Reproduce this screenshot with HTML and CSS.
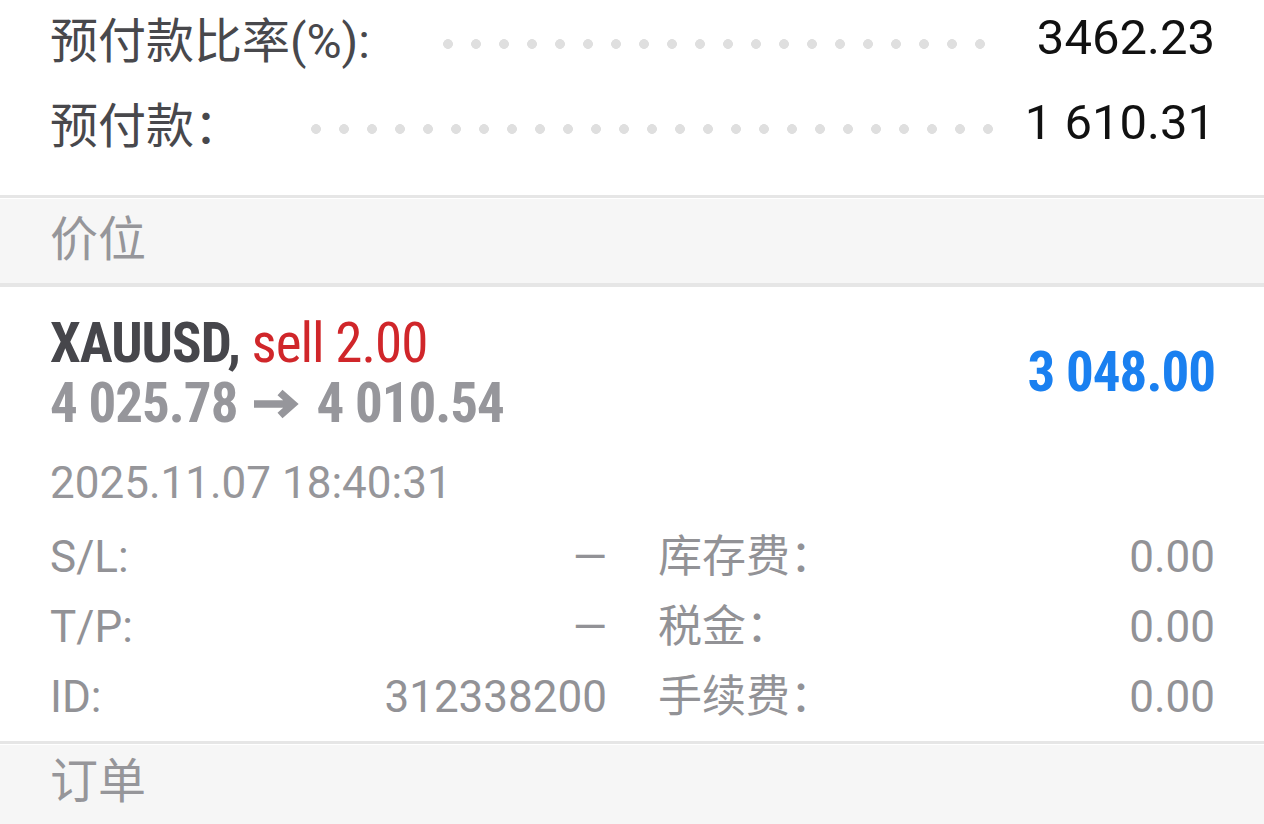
FILE: index.html
```html
<!DOCTYPE html>
<html lang="zh-CN">
<head>
    <meta charset="UTF-8">
    <meta name="viewport" content="width=device-width, initial-scale=1.0">
    <title>交易</title>
    <link rel="stylesheet" href="styles.css">
</head>
<body>
<div class="summary">
    <div class="summary-row">
        <span class="summary-label">预付款比率(%):</span>
        <span class="dots dots-ratio"></span>
        <span class="summary-value">3462.23</span>
    </div>
    <div class="summary-row">
        <span class="summary-label">预付款：</span>
        <span class="dots dots-margin"></span>
        <span class="summary-value">1 610.31</span>
    </div>
</div>

<div class="section-header">价位</div>

<div class="position">
    <div class="position-top">
        <div class="position-title">
            <div class="title-line"><span class="symbol">XAUUSD,</span> <span class="sell">sell 2.00</span></div>
            <div class="title-line prices">4 025.78<svg class="arrow" width="46" height="30" viewBox="0 0 46 30"><path d="M1 15H39M27 3.5L40 15L27 26.5" fill="none" stroke="currentColor" stroke-width="7.5"/></svg>4 010.54</div>
        </div>
        <div class="profit">3 048.00</div>
    </div>
    <div class="open-time">2025.11.07 18:40:31</div>
    <div class="details">
        <div class="detail"><span>S/L:</span><span>—</span></div>
        <div class="detail"><span>库存费：</span><span>0.00</span></div>
        <div class="detail"><span>T/P:</span><span>—</span></div>
        <div class="detail"><span>税金：</span><span>0.00</span></div>
        <div class="detail"><span>ID:</span><span>312338200</span></div>
        <div class="detail"><span>手续费：</span><span>0.00</span></div>
    </div>
</div>

<div class="section-header section-orders">订单</div>
</body>
</html>
```

FILE: styles.css
```css
* {
    box-sizing: border-box;
    margin: 0;
    padding: 0;
}

body {
    background-color: #fff;
    font-family: Roboto, "Noto Sans CJK SC", sans-serif;
    width: 1264px;
    height: 824px;
    overflow: hidden;
}

.summary {
    display: flex;
    flex-direction: column;
    gap: 11px;
    padding: 0 49px 36px 50px;
}

.summary-row {
    display: flex;
    align-items: center;
    height: 74px;
}

.summary-label {
    font-size: 48px;
    color: #48484c;
    white-space: nowrap;
}

.summary-value {
    font-size: 49px;
    color: #111;
    white-space: nowrap;
}

.dots {
    flex: none;
    height: 10px;
    margin-top: 14px;
    margin-left: auto;
    background: radial-gradient(circle, #dfdfdf 4.6px, rgba(223,223,223,0) 5.2px) 0 0 / 28px 10px repeat-x;
}

.dots-ratio {
    width: 560px;
    margin-right: 43px;
}

.dots-margin {
    width: 700px;
    margin-right: 23px;
}

.section-header {
    border-top: 3px solid #e6e6e6;
    border-bottom: 4px solid #e6e6e6;
    background-color: #f6f6f6;
    box-shadow: inset 0 1px 0 #fff;
    height: 92px;
    line-height: 84px;
    padding-left: 50px;
    font-size: 48px;
    color: #96969a;
}

.section-orders {
    border-bottom: none;
    height: 90px;
    line-height: 76px;
}

.position {
    padding: 26px 49px 9px 50px;
}

.position-top {
    display: flex;
    align-items: center;
    justify-content: space-between;
}

.title-line,
.profit {
    font-family: "Roboto Condensed", "Liberation Sans Narrow", Roboto, sans-serif;
    font-stretch: condensed;
    font-weight: 700;
    font-size: 55px;
    letter-spacing: -1px;
    line-height: 60px;
    white-space: nowrap;
}

.symbol {
    color: #46464b;
}

.sell {
    color: #d0262a;
    font-weight: 400;
}

.prices {
    display: flex;
    align-items: center;
    color: #96969b;
}

.arrow {
    margin: 2px 17px 0 16px;
}

.profit {
    color: #1a80f0;
    margin-top: -2px;
}

.open-time {
    margin-top: 15px;
    font-size: 44px;
    line-height: 70px;
    color: #96969a;
}

.details {
    display: grid;
    grid-template-columns: 1fr 1fr;
    column-gap: 51px;
    margin-top: 4px;
}

.detail {
    display: flex;
    justify-content: space-between;
    font-size: 44px;
    line-height: 70px;
    color: #929296;
}
```
